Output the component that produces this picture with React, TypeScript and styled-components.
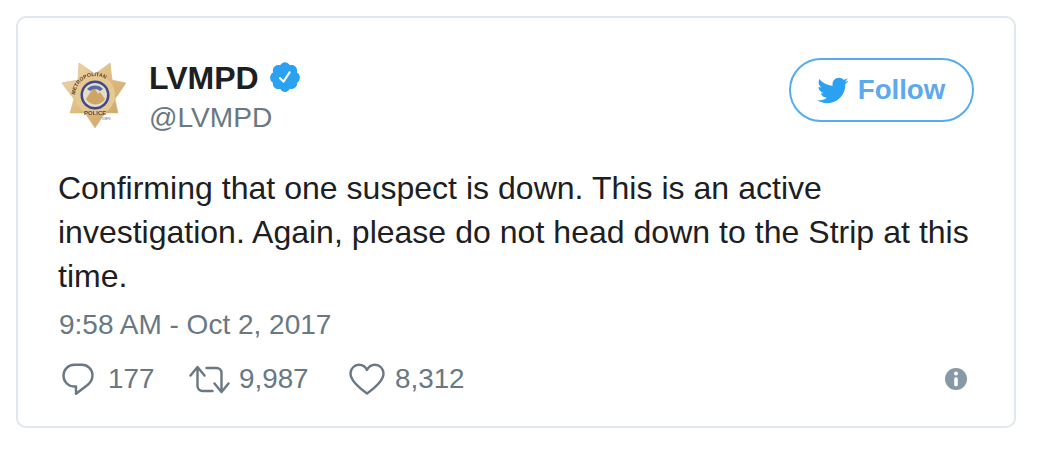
import React from "react";
import styled, { createGlobalStyle } from "styled-components";

const Global = createGlobalStyle`
  html, body { margin: 0; padding: 0; background: #fff; }
  body { font-family: "Liberation Sans", Arial, sans-serif; }
`;
const Page = styled.div`
  width: 1056px; height: 452px; padding: 16px 0 0 16px; box-sizing: border-box; background: #fff;
`;
const Card = styled.article`
  width: 1000px; height: 412px; box-sizing: border-box; border: 2px solid #e1e8ed; border-radius: 10px;
  padding: 38px 40px 0 40px; display: flex; flex-direction: column;
`;
const Header = styled.header`
  display: flex; align-items: flex-start; height: 84px;
`;
const Avatar = styled.svg`
  width: 74px; height: 74px; flex: none; margin: 4px 16px 0 1px; filter: blur(.5px);
`;
const Names = styled.div`
  display: flex; flex-direction: column; padding-top: 0;
`;
const NameRow = styled.div`
  display: flex; align-items: center; gap: 9px; height: 44px;
`;
const Name = styled.span`
  font-size: 32px; font-weight: 700; color: #1c2022; line-height: 44px;
`;
const Badge = styled.svg`
  width: 34px; height: 34px; fill: #2ba1f2; margin-top: -3px;
`;
const Handle = styled.span`
  font-size: 28.1px; color: #697882; line-height: 36px; margin-top: 0;
`;
const FollowButton = styled.button`
  margin: 2px 0 0 auto; width: 185px; height: 64px; box-sizing: border-box; border: 2px solid #55acee; border-radius: 32px;
  background: #fff; color: #5da9ee; font: 700 27.6px "Liberation Sans", Arial, sans-serif;
  display: flex; align-items: center; justify-content: center; gap: 9px; padding: 0 2px 0 0;
`;
const Bird = styled.svg`
  width: 33px; height: 33px; fill: #2ba1f2; margin-top: 1px;
`;
const Body = styled.p`
  margin: 26px 0 0 0; font-size: 32px; line-height: 44px; color: #1c2022; width: 930px; word-spacing: .15px;
`;
const Time = styled.div`
  margin: 7px 0 0 1px; font-size: 28px; line-height: 40px; color: #697882;
`;
const Actions = styled.div`
  display: flex; align-items: center; margin: 12px 0 0 4px; height: 44px;
`;
const Action = styled.div<{ $gap: number; $w: number }>`
  display: flex; align-items: center; gap: ${p => p.$gap}px; width: ${p => p.$w}px;
  font-size: 27.8px; color: #697882;
`;
const ActionIcon = styled.svg`
  flex: none; fill: none; stroke: #697882; stroke-width: 2.4; stroke-linecap: round; stroke-linejoin: round;
`;
const Info = styled.svg`
  width: 24px; height: 24px; margin-left: auto; margin-right: 6px;
`;

const Star = () => (
  <Avatar viewBox="0 0 74 74" role="img" aria-label="LVMPD badge">
    <defs>
      <linearGradient id="gold" x1="0" y1="0" x2="1" y2="1">
        <stop offset="0" stopColor="#f1dcae" />
        <stop offset=".5" stopColor="#deba80" />
        <stop offset="1" stopColor="#c9a062" />
      </linearGradient>
      <path id="arcTop" d="M16 36a20 20 0 0 1 40 0" />
    </defs>
    <polygon
      fill="url(#gold)"
      stroke="#d8b67e"
      strokeWidth=".6"
      strokeLinejoin="round"
      points="20,3 36,14 51,3 53,20 67,23 56,39 59,53 46,53 36,68 26,53 11,53 15,39 3,23 19,20"
    />
    <circle cx="36" cy="35" r="20" fill="#e6c893" />
    <circle cx="36" cy="35" r="14.500" fill="#3c4a8a" />
    <circle cx="36" cy="35" r="12" fill="#e8dcc8" />
    <path d="M27 39l8-12 4 7 2-2 5 7a11 11 0 0 1-19 0z" fill="#cda565" />
    <path d="M28 29a11 11 0 0 1 16 0l-3 2a8 8 0 0 0-10 0z" fill="#5a6aa6" />
    <text fontFamily="Liberation Sans" fontWeight="700" fontSize="5.200" fill="#5f4230">
      <textPath href="#arcTop" startOffset="2%">METROPOLITAN</textPath>
    </text>
    <text fontFamily="Liberation Sans" fontWeight="700" fontSize="6" fill="#5f4230" x="25" y="55">POLICE</text>
    <text fontFamily="Liberation Sans" fontSize="2.600" fill="#666" x="43" y="60">LVMPD</text>
  </Avatar>
);

export default function App() {
  return (
    <Page>
      <Global />
      <Card>
        <Header>
          <Star />
          <Names>
            <NameRow>
              <Name>LVMPD</Name>
              <Badge viewBox="0 0 24 24" aria-label="Verified">
                <path d="M22.5 12.5c0-1.58-.875-2.95-2.148-3.6.154-.435.238-.905.238-1.4 0-2.21-1.71-3.998-3.818-3.998-.47 0-.92.084-1.336.25C14.818 2.415 13.51 1.5 12 1.5s-2.816.917-3.437 2.25c-.415-.165-.866-.25-1.336-.25-2.11 0-3.818 1.79-3.818 4 0 .494.083.964.237 1.4-1.272.65-2.147 2.018-2.147 3.6 0 1.495.782 2.798 1.942 3.486-.02.17-.032.34-.032.514 0 2.21 1.708 4 3.818 4 .47 0 .92-.086 1.335-.25.62 1.334 1.926 2.25 3.437 2.25 1.512 0 2.818-.916 3.437-2.25.415.163.865.248 1.336.248 2.11 0 3.818-1.79 3.818-4 0-.174-.012-.344-.033-.513 1.158-.687 1.943-1.99 1.943-3.484zm-6.616-3.334l-4.334 6.5c-.145.217-.382.334-.625.334-.143 0-.288-.04-.416-.126l-.115-.094-2.415-2.415c-.293-.293-.293-.768 0-1.06s.768-.294 1.06 0l1.77 1.767 3.825-5.74c.23-.345.696-.436 1.04-.207.346.23.44.696.21 1.04z" />
              </Badge>
            </NameRow>
            <Handle>@LVMPD</Handle>
          </Names>
          <FollowButton>
            <Bird viewBox="0 0 24 24">
              <path d="M23.643 4.937c-.835.37-1.732.62-2.675.733.962-.576 1.7-1.49 2.048-2.578-.9.534-1.897.922-2.958 1.13-.85-.904-2.06-1.47-3.4-1.47-2.572 0-4.658 2.086-4.658 4.66 0 .364.042.718.12 1.06-3.873-.195-7.304-2.05-9.602-4.868-.4.69-.63 1.49-.63 2.342 0 1.616.823 3.043 2.072 3.878-.764-.025-1.482-.234-2.11-.583v.06c0 2.257 1.605 4.14 3.737 4.568-.392.106-.803.162-1.227.162-.3 0-.593-.028-.877-.082.593 1.85 2.313 3.198 4.352 3.234-1.595 1.25-3.604 1.995-5.786 1.995-.376 0-.747-.022-1.112-.065 2.062 1.323 4.51 2.093 7.14 2.093 8.57 0 13.255-7.098 13.255-13.254 0-.2-.005-.402-.014-.602.91-.658 1.7-1.477 2.323-2.41z" />
            </Bird>
            Follow
          </FollowButton>
        </Header>
        <Body>Confirming that one suspect is down. This is an active investigation. Again, please do not head down to the Strip at this time.</Body>
        <Time>9:58 AM - Oct 2, 2017</Time>
        <Actions>
          <Action $gap={14} $w={127}>
            <ActionIcon width="32" height="33" viewBox="0 0 32 33">
              <path d="M12 1.800h8a10.500 10.500 0 0 1 10.500 10.500c0 5-2.600 8.300-6.600 10.900L14 30.800v-7.300h-2a10.700 10.700 0 0 1-10.500-10.800A10.700 10.700 0 0 1 12 1.800z" />
            </ActionIcon>
            177
          </Action>
          <Action $gap={9} $w={160}>
            <ActionIcon width="41" height="29" viewBox="0 0 41 29">
              <path d="M1.500 10.500L8.500 2l7 8.500M8.500 3v18a5 5 0 0 0 5 5h10" />
              <path d="M39.500 18.500l-7 8.500-7-8.500M32.500 26V8a5 5 0 0 0-5-5h-10" />
            </ActionIcon>
            9,987
          </Action>
          <Action $gap={10} $w={200}>
            <ActionIcon width="36" height="32" viewBox="0 0 36 32">
              <path d="M18 30.500C9 24 1.500 17 1.500 10.500 1.500 5.500 5.500 1.700 10 1.700c3.500 0 6.500 2 8 5.300 1.500-3.300 4.500-5.300 8-5.300 4.500 0 8.500 3.800 8.500 8.800C34.500 17 27 24 18 30.500z" />
            </ActionIcon>
            8,312
          </Action>
          <Info viewBox="0 0 24 24" aria-label="Info">
            <circle cx="12" cy="12" r="11" fill="#8899a6" />
            <circle cx="12" cy="6.600" r="2" fill="#fff" />
            <rect x="10.200" y="10.300" width="3.600" height="9" rx="1.500" fill="#fff" />
          </Info>
        </Actions>
      </Card>
    </Page>
  );
}
